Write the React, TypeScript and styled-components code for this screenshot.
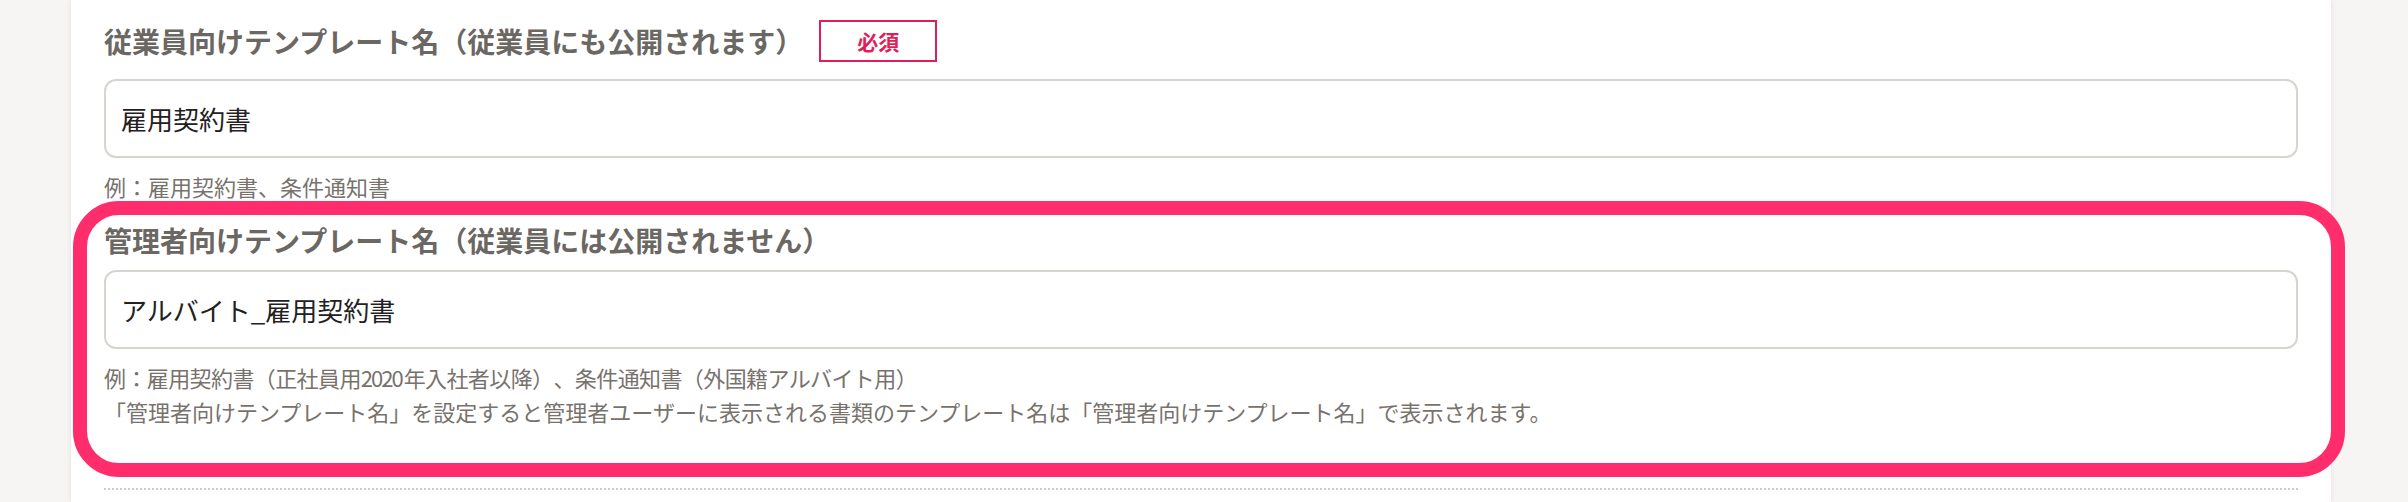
import React from "react";
import styled, { createGlobalStyle } from "styled-components";

const Global = createGlobalStyle`
  html, body { margin: 0; padding: 0; }
  body {
    background: #f6f5f3;
    font-family: "Noto Sans CJK JP", "Noto Sans", sans-serif;
    overflow: hidden;
  }
`;

const Page = styled.div`
  height: 502px;
  padding-left: 71px;
  padding-right: 77px;
  display: flex;
`;

const Card = styled.section`
  flex: 1;
  background: #fff;
  box-shadow: 0 0 6px rgba(0, 0, 0, 0.08);
  padding: 20px 33px 0 33px;
  display: flex;
  flex-direction: column;
`;

const Field = styled.div<{ $gapTop?: number }>`
  position: relative;
  display: flex;
  flex-direction: column;
  margin-top: ${(p) => p.$gapTop ?? 0}px;
`;

const Header = styled.div<{ $height: number }>`
  display: flex;
  align-items: center;
  height: ${(p) => p.$height}px;
`;

const Label = styled.span`
  font-size: 28px;
  font-weight: 700;
  letter-spacing: 0px;
  color: #6b6762;
  line-height: 40px;
  white-space: nowrap;
`;

const Badge = styled.span`
  box-sizing: border-box;
  margin-left: 16px;
  width: 118px;
  height: 42px;
  border: 2px solid #e01f5a;
  color: #e01f5a;
  font-size: 21px;
  font-weight: 700;
  display: flex;
  align-items: center;
  justify-content: center;
`;

const Input = styled.input<{ $gapTop: number }>`
  box-sizing: border-box;
  margin-top: ${(p) => p.$gapTop}px;
  height: 79px;
  width: 100%;
  border: 2px solid #d8d4cf;
  border-radius: 12px;
  padding: 0 15px;
  font-family: "Noto Sans CJK JP", "Noto Sans", sans-serif;
  font-size: 26px;
  color: #23211f;
  background: #fff;
  outline: none;
`;

const Help = styled.div<{ $gapTop: number }>`
  margin-top: ${(p) => p.$gapTop}px;
  display: flex;
  flex-direction: column;
  font-size: 22px;
  line-height: 34.5px;
  color: #77726c;
  text-spacing-trim: space-all;
`;

const HelpLine = styled.span<{ $tracking?: number }>`
  white-space: nowrap;
  letter-spacing: ${(p) => p.$tracking ?? 0}px;
`;

const Digits = styled.span`
  letter-spacing: -2px;
  margin-right: 2px;
`;

const Highlight = styled.div`
  position: absolute;
  top: -19px;
  left: -31px;
  right: -47px;
  bottom: -48px;
  border: 14px solid #ff2d6c;
  border-radius: 46px;
  pointer-events: none;
`;

const Divider = styled.hr`
  margin: 59px 0 0 0;
  border: none;
  border-top: 2px dotted #cfcbc6;
  height: 0;
`;

export default function App() {
  return (
    <>
      <Global />
      <Page>
        <Card>
          <Field>
            <Header $height={42}>
              <Label>従業員向けテンプレート名（従業員にも公開されます）</Label>
              <Badge>必須</Badge>
            </Header>
            <Input $gapTop={17} defaultValue="雇用契約書" />
            <Help $gapTop={11}>
              <HelpLine>例：雇用契約書、条件通知書</HelpLine>
            </Help>
          </Field>
          <Field $gapTop={16}>
            <Highlight />
            <Header $height={40}>
              <Label>管理者向けテンプレート名（従業員には公開されません）</Label>
            </Header>
            <Input $gapTop={10} defaultValue="アルバイト_雇用契約書" />
            <Help $gapTop={11}>
              <HelpLine $tracking={-0.6}>
                例：雇用契約書（正社員用<Digits>2020</Digits>年入社者以降）、条件通知書（外国籍アルバイト用）
              </HelpLine>
              <HelpLine $tracking={0}>
                「管理者向けテンプレート名」を設定すると管理者ユーザーに表示される書類のテンプレート名は「管理者向けテンプレート名」で表示されます。
              </HelpLine>
            </Help>
          </Field>
          <Divider />
        </Card>
      </Page>
    </>
  );
}
